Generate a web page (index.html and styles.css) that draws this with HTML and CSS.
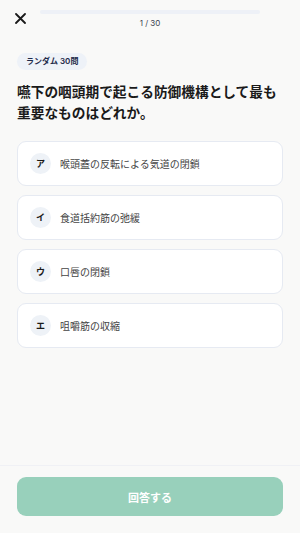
FILE: index.html
```html
<!DOCTYPE html>
<html lang="ja">
<head>
  <meta charset="UTF-8" />
  <meta name="viewport" content="width=device-width, initial-scale=1.0"/>
  <title>Quiz</title>
  <link rel="stylesheet" href="styles.css">
</head>
<body>
  <div class="app">
    <header class="top">
      <button class="close" aria-label="閉じる">
        <svg width="11" height="11" viewBox="0 0 11 11">
          <path d="M1 1 L10 10 M10 1 L1 10" stroke="#1a1a1a" stroke-width="1.8" stroke-linecap="round"/>
        </svg>
      </button>
      <div class="progress">
        <div class="bar"><div class="fill" style="width: 0%"></div></div>
        <div class="count">1 / 30</div>
      </div>
    </header>

    <main class="content">
      <span class="tag">ランダム 30問</span>
      <h1 class="question">嚥下の咽頭期で起こる防御機構として最も重要なものはどれか。</h1>

      <div class="options">
        <div class="option"><span class="mark">ア</span><span class="label">喉頭蓋の反転による気道の閉鎖</span></div>
        <div class="option"><span class="mark">イ</span><span class="label">食道括約筋の弛緩</span></div>
        <div class="option"><span class="mark">ウ</span><span class="label">口唇の閉鎖</span></div>
        <div class="option"><span class="mark">エ</span><span class="label">咀嚼筋の収縮</span></div>
      </div>
    </main>

    <footer class="bottom">
      <button class="submit" disabled>回答する</button>
    </footer>
  </div>
</body>
</html>
```

FILE: styles.css
```css
* {
  box-sizing: border-box;
}

body {
  margin: 0;
  background: #f9f9f8;
  font-family: Inter, "Noto Sans CJK JP", sans-serif;
  color: #1c1c1c;
}

.app {
  height: 533px;
  display: flex;
  flex-direction: column;
}

.top {
  display: flex;
  align-items: flex-start;
  padding: 10px 40px 0 13px;
  height: 36px;
}

.close {
  border: none;
  background: none;
  padding: 2px;
  margin-top: 1px;
  width: 15px;
  height: 15px;
  display: flex;
  cursor: pointer;
}

.progress {
  flex: 1;
  margin-left: 12px;
  display: flex;
  flex-direction: column;
  align-items: center;
}

.bar {
  width: 100%;
  height: 4px;
  border-radius: 2px;
  background: #eef1f7;
}

.fill {
  height: 100%;
  border-radius: 2px;
  background: #3aa57f;
}

.count {
  margin-top: 4px;
  font-size: 8px;
  color: #3b4350;
}

.content {
  flex: 1;
  padding: 12px 17px 0;
}

.tag {
  display: inline-block;
  padding: 3px 9px;
  border-radius: 9px;
  background: #eef2f8;
  color: #1e2a4a;
  font-size: 8px;
  font-weight: 600;
  line-height: 11px;
}

.question {
  margin: 12px 0 17px;
  font-size: 13.7px;
  font-weight: 700;
  line-height: 21px;
  color: #1a1a1a;
}

.options {
  display: flex;
  flex-direction: column;
  gap: 9px;
}

.option {
  height: 45px;
  display: flex;
  align-items: center;
  padding: 0 12px;
  background: #ffffff;
  border: 1px solid #e6eaf2;
  border-radius: 9px;
}

.mark {
  width: 21px;
  height: 21px;
  border-radius: 50%;
  background: #eef2f7;
  display: flex;
  align-items: center;
  justify-content: center;
  font-size: 9px;
  font-weight: 700;
  color: #1a1a1a;
}

.label {
  margin-left: 9px;
  font-size: 10px;
  color: #444444;
}

.bottom {
  border-top: 1px solid #f0f1f5;
  padding: 11px 17px 17px;
}

.submit {
  width: 100%;
  height: 39px;
  border: none;
  border-radius: 9px;
  background: #98d0bb;
  color: #ffffff;
  font-family: inherit;
  font-size: 11px;
  font-weight: 700;
}
```
